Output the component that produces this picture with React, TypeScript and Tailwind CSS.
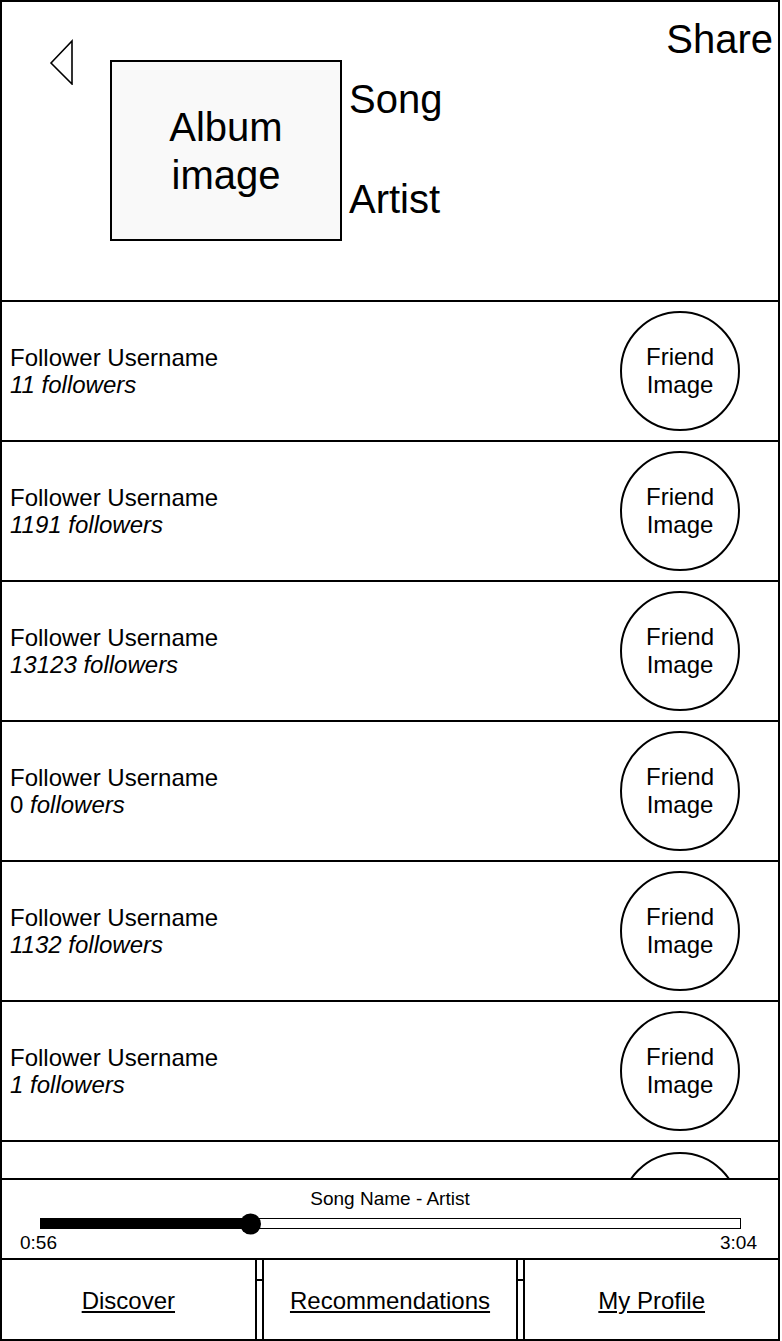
import React from 'react';

const followers = [
  { count: '11', italicCount: true },
  { count: '1191', italicCount: true },
  { count: '13123', italicCount: true },
  { count: '0', italicCount: false },
  { count: '1132', italicCount: true },
  { count: '1', italicCount: true },
];

function FriendImage({ label = true }: { label?: boolean }) {
  return (
    <div className="w-[120px] h-[120px] shrink-0 rounded-full border-2 border-black flex flex-col items-center justify-center text-center text-[24px] leading-[28px]">
      {label && (
        <>
          <div>Friend</div>
          <div>Image</div>
        </>
      )}
    </div>
  );
}

function FollowerRow({ count, italicCount }: { count: string; italicCount: boolean }) {
  return (
    <div className="h-[140px] shrink-0 border-b-2 border-black flex items-center justify-between pl-[8px] pr-[38px]">
      <div className="text-[24px] leading-[27px]">
        <div>Follower Username</div>
        <div>
          {italicCount ? <span className="italic">{count} followers</span> : (
            <>
              {count} <span className="italic">followers</span>
            </>
          )}
        </div>
      </div>
      <FriendImage />
    </div>
  );
}

export default function App() {
  return (
    <div className="w-[780px] h-[1341px] border-2 border-black bg-white text-black flex flex-col overflow-hidden font-['Liberation_Sans',Arial,sans-serif]">
      {/* Header */}
      <div className="h-[300px] shrink-0 border-b-2 border-black flex">
        <svg className="ml-[47px] mt-[37px] shrink-0" width="24" height="46" viewBox="0 0 24 46">
          <polygon points="2,24 23,2 23,45" fill="none" stroke="black" strokeWidth="1.6" />
        </svg>
        <div className="ml-[37px] mt-[58px] w-[232px] h-[181px] shrink-0 border-2 border-black bg-[#f9f9f9] flex items-center justify-center text-center text-[40px] leading-[48px]">
          <div>
            Album
            <br />
            image
          </div>
        </div>
        <div className="ml-[7px] mt-[73px] flex flex-col gap-[52px] text-[40px] leading-[48px]">
          <div>Song</div>
          <div>Artist</div>
        </div>
        <div className="ml-auto mt-[13px] mr-[5px] text-[40px] leading-[48px]">Share</div>
      </div>

      {/* Followers list (scrolled, last row partly visible) */}
      <div className="h-[876px] shrink-0 overflow-hidden flex flex-col">
        {followers.map((f, i) => (
          <FollowerRow key={i} count={f.count} italicCount={f.italicCount} />
        ))}
        <div className="h-[140px] shrink-0 flex items-center justify-end pr-[38px]">
          <FriendImage label={false} />
        </div>
      </div>

      {/* Player */}
      <div className="h-[80px] shrink-0 border-t-2 border-black flex flex-col">
        <div className="mt-[8px] text-center text-[19px] leading-[22px]">Song Name - Artist</div>
        <div className="relative ml-[38px] mt-[8px] w-[701px] h-[11px] shrink-0 border border-black bg-white flex">
          <div className="w-[210px] h-full bg-black" />
          <div className="absolute left-[199px] top-1/2 -translate-y-1/2 w-[21px] h-[21px] rounded-full bg-black" />
        </div>
        <div className="mt-[3px] flex justify-between pl-[18px] pr-[21px] text-[19px] leading-[22px]">
          <span>0:56</span>
          <span>3:04</span>
        </div>
      </div>

      {/* Bottom nav */}
      <div className="flex-1 border-t-2 border-black flex">
        <div className="flex-1 flex items-center justify-center pt-[3px] text-[24px] leading-[28px] underline">Discover</div>
        <div className="w-[9px] shrink-0 border-x-2 border-black">
          <div className="mt-[19px] h-[2px] bg-black" />
        </div>
        <div className="flex-1 flex items-center justify-center pt-[3px] text-[24px] leading-[28px] underline">Recommendations</div>
        <div className="w-[9px] shrink-0 border-x-2 border-black">
          <div className="mt-[19px] h-[2px] bg-black" />
        </div>
        <div className="flex-1 flex items-center justify-center pt-[3px] text-[24px] leading-[28px] underline">My Profile</div>
      </div>
    </div>
  );
}
